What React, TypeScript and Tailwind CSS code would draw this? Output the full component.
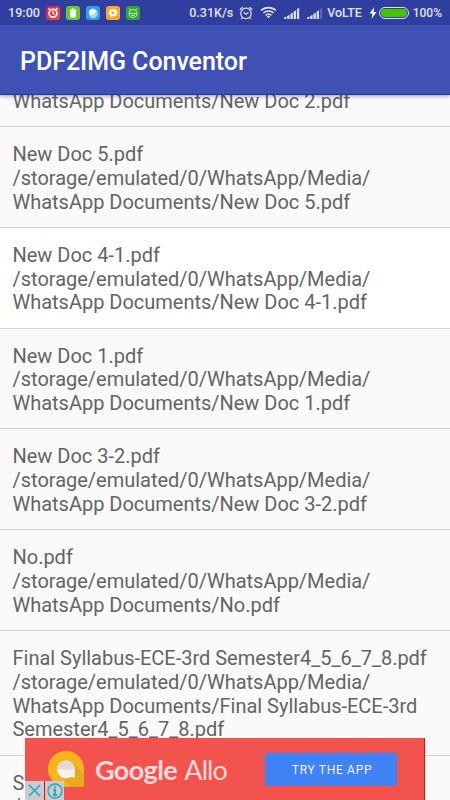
import type { ReactNode } from "react";

const files: { name?: string; lines: string[]; height: string; selected?: boolean }[] = [
  { lines: ["WhatsApp Documents/New Doc 2.pdf"], height: "h-[37px]" },
  { name: "New Doc 5.pdf", lines: ["/storage/emulated/0/WhatsApp/Media/", "WhatsApp Documents/New Doc 5.pdf"], height: "h-[100.8px]" },
  { name: "New Doc 4-1.pdf", lines: ["/storage/emulated/0/WhatsApp/Media/", "WhatsApp Documents/New Doc 4-1.pdf"], height: "h-[100.8px]", selected: true },
  { name: "New Doc 1.pdf", lines: ["/storage/emulated/0/WhatsApp/Media/", "WhatsApp Documents/New Doc 1.pdf"], height: "h-[100.8px]" },
  { name: "New Doc 3-2.pdf", lines: ["/storage/emulated/0/WhatsApp/Media/", "WhatsApp Documents/New Doc 3-2.pdf"], height: "h-[100.8px]" },
  { name: "No.pdf", lines: ["/storage/emulated/0/WhatsApp/Media/", "WhatsApp Documents/No.pdf"], height: "h-[100.8px]" },
  {
    name: "Final Syllabus-ECE-3rd Semester4_5_6_7_8.pdf",
    lines: ["/storage/emulated/0/WhatsApp/Media/", "WhatsApp Documents/Final Syllabus-ECE-3rd", "Semester4_5_6_7_8.pdf"],
    height: "h-[124.6px]",
  },
  { name: "S", lines: ["/"], height: "h-[100.8px]" },
];

function AppBadge({ color, children }: { color: string; children: ReactNode }) {
  return (
    <span className={`flex h-[14px] w-[14px] items-center justify-center rounded-[3px] ${color}`}>
      <svg width="14" height="14" viewBox="0 0 14 14" fill="none">{children}</svg>
    </span>
  );
}

function Signal({ weak }: { weak?: boolean }) {
  return (
    <svg width="16" height="12" viewBox="0 0 16 12" fill="#d9dcf2">
      <path d="M0 12v-1.5l2.4-1V12zM3.2 12V8.9l2.4-1.2V12zM6.4 12V7l2.4-1.4V12zM9.6 12V4.8L12 3.2V12z" />
      <path d="M12.9 12V2.2L15.2.6V12z" opacity={weak ? 0.25 : 1} />
    </svg>
  );
}

function StatusBar() {
  return (
    <div className="flex h-[25px] items-center bg-[#303f9f] pl-2 pr-[8px] pt-px text-[12px] font-medium text-[#e0e3f5]">
      <span className="w-[38px] text-[12.6px]">19:00</span>
      <div className="-mt-px flex gap-[6px]">
        <AppBadge color="bg-linear-to-br from-[#c91b52] to-[#ff4a16]">
          <circle cx="7" cy="7.3" r="3.9" stroke="#fff" strokeWidth="1.7" />
          <path d="M7 5v2.5l1.6 1M2.4 3.5l1.6-1.4M11.6 3.5L10 2.1" stroke="#fff" strokeWidth="1.3" />
        </AppBadge>
        <AppBadge color="bg-[#69c82d]">
          <path d="M4.2 3.5h1.5v-1h2.6v1h1.5v8H4.2z" fill="#fff" />
        </AppBadge>
        <AppBadge color="bg-[#25a4f1]">
          <circle cx="7" cy="7" r="4.2" fill="#fff" />
          <path d="M3.5 10.3 10.8 5.2A4.2 4.2 0 0 1 3.5 10.3z" fill="#b2daf8" />
        </AppBadge>
        <AppBadge color="bg-[#ffa72d]">
          <path fillRule="evenodd" d="M7 3c2.6 0 4.3 1.5 4.3 3.7S9.6 10.3 7.2 10.3L5 11.7V9.8C3.6 9.2 2.8 8 2.8 6.7 2.8 4.5 4.5 3 7 3zm0 2.2a1.6 1.6 0 1 0 0 3.2 1.6 1.6 0 0 0 0-3.2z" fill="#fff" />
        </AppBadge>
        <AppBadge color="bg-[#31a533]">
          <path d="M3.2 6.4C3.2 4.6 4.8 3.6 7 3.6s3.8 1 3.8 2.8v2.2c0 1.8-1.6 2.8-3.8 2.8S3.2 10.4 3.2 8.6zM3.2 7.4h7.6M4.4 4.3 3.3 2.5M9.6 4.3l1.1-1.8M5 9.3h4M5.3 5.7h.5M8.3 5.7h.5" stroke="#c5f5af" strokeWidth="1" />
        </AppBadge>
      </div>
      <span className="ml-auto text-[12.5px]">0.31K/s</span>
      <svg className="-mt-px ml-[6px]" width="14" height="14" viewBox="0 0 14 14" fill="none" stroke="#dfe2f5" strokeWidth="1.2">
        <circle cx="7" cy="7.4" r="5.2" />
        <path d="m4.6 6.2 2.4 2 2.5-1.8M.8 3.8 3.7 1.2M10.3 1.2l2.9 2.6M3.2 11.8 2 13.2M10.8 11.8l1.2 1.4" />
      </svg>
      <svg className="-mt-px ml-[7px]" width="17" height="13" viewBox="0 0 17 13" fill="none" stroke="#e0e3f5" strokeWidth="1.6">
        <path d="M1 4.5C5.2.6 11.8.6 16 4.5M3.3 7c3-2.7 7.4-2.7 10.4 0M5.6 9.3c1.7-1.5 4.1-1.5 5.8 0" />
        <path d="m6.8 10.6 1.7-1 1.7 1-1.7 1.7z" fill="#e0e3f5" stroke="none" />
      </svg>
      <span className="-mt-px ml-[7px] flex gap-[7px]"><Signal /><Signal weak /></span>
      <span className="ml-[4px] text-[12.4px]">VoLTE</span>
      <svg className="-mt-px ml-[7px]" width="8" height="12" viewBox="0 0 8 12"><path d="M5.3 0 .5 6.6h3L2.5 12l5-7h-3z" fill="#fff" /></svg>
      <span className="-mt-px ml-[2px] flex h-[12px] w-[30px] rounded-full border border-[#dfe2f5] p-px"><span className="flex-1 rounded-full bg-[#48c500]" /></span>
      <span className="ml-[4px] text-[12px]">100%</span>
    </div>
  );
}

function AdBanner() {
  return (
    <div className="absolute bottom-0 left-[25px] flex h-[62px] w-[400px] items-start border-r border-[#f00] bg-[#f2534c]">
      <svg className="ml-[23px] mt-[13px]" width="37" height="37" viewBox="0 0 37 37">
        <path d="M18 0a18 18 0 1 0 0 36h16a2 2 0 0 0 2-2V18A18 18 0 0 0 18 0z" fill="#f7b518" />
        <path d="M25 12 36 23v11a2 2 0 0 1-2 2H23L12 25z" fill="#e9a91a" />
        <circle cx="18" cy="18.5" r="8.9" fill="#f5f3f1" />
        <path d="M26.9 18.5v8.3L21 25.5z" fill="#f5f3f1" />
        <path d="M9.1 18.5a8.9 8.9 0 0 1 17.8 0z" fill="#dedbd9" />
      </svg>
      <div className="ml-[10px] mt-[15px] flex w-[132px] justify-between whitespace-nowrap font-['Lato',sans-serif] text-[27px] leading-[34px] text-[#ffd9dc]">
        <span className="font-bold tracking-[-0.6px]">Google</span>
        <span className="tracking-[-0.9px]">Allo</span>
      </div>
      <button className="ml-[38px] mt-[15px] h-[33px] w-[132px] rounded-[2px] bg-[#4083f7] pl-[2px] text-[12px] tracking-[0.7px] text-[#f2f6ff]">TRY THE APP</button>
      <div className="absolute bottom-0 left-0 flex h-[19px] w-[39px] gap-px bg-[#f00]">
        <span className="flex flex-1 items-center justify-center bg-[#cbcbcb]">
          <svg width="13" height="13" viewBox="0 0 13 13" stroke="#18aac8" strokeWidth="1.5"><path d="m1 1 11 11M12 1 1 12" /></svg>
        </span>
        <span className="flex flex-1 items-center justify-center bg-[#cbcbcb]">
          <svg width="16" height="16" viewBox="0 0 16 16" fill="none" stroke="#18aac8">
            <circle cx="8" cy="8" r="7" strokeWidth="1.4" /><path d="M8 3.3v2M6.3 7H8v5M6 12h4" strokeWidth="1.8" />
          </svg>
        </span>
      </div>
    </div>
  );
}

export default function App() {
  return (
    <main className="relative flex h-[800px] w-[450px] flex-col overflow-hidden bg-[#fafafa] font-['Roboto',sans-serif]">
      <header className="relative z-10 shrink-0 shadow-[0_1px_4px_rgba(0,0,0,0.4)]">
        <StatusBar />
        <div className="flex h-[70px] items-center border-b border-[#1838b5] bg-[#3f51b5] pl-5 pt-[4px]">
          <h1 className="text-[25px] leading-[30px] font-medium tracking-[-0.04px] text-white">PDF2IMG Conventor</h1>
        </div>
      </header>
      <section className="min-h-0 flex-1 overflow-hidden">
        <ul className="-mt-[5px]">
          {files.map((file) => (
            <li key={file.lines.join() + file.name} className={`${file.height} ${file.selected ? "bg-white" : ""} ${file.name ? "pt-[16.1px]" : ""} border-b border-[#d5d5d5] pl-[12.5px] text-[20px] leading-[23.8px] tracking-[-0.015px] whitespace-nowrap text-[#646464]`}>
              {file.name ? <p>{file.name}</p> : null}
              {file.lines.map((line) => <p key={line}>{line}</p>)}
            </li>
          ))}
        </ul>
      </section>
      <AdBanner />
    </main>
  );
}
